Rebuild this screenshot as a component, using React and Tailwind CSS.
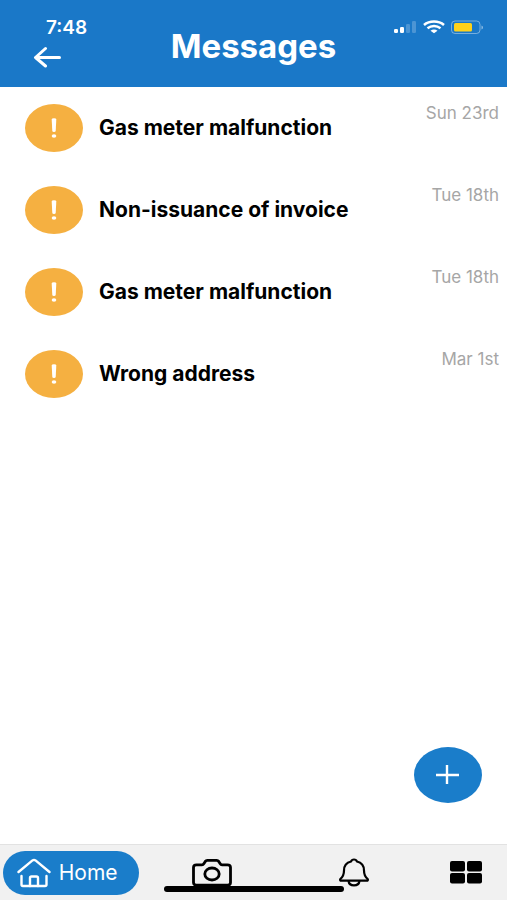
import React from 'react'

const messages = [
    { id: 1, title: 'Gas meter malfunction', date: 'Sun 23rd' },
    { id: 2, title: 'Non-issuance of invoice', date: 'Tue 18th' },
    { id: 3, title: 'Gas meter malfunction', date: 'Tue 18th' },
    { id: 4, title: 'Wrong address', date: 'Mar 1st' },
]

const StatusIcons = () => (
    <svg className="h-4 w-[92px]" viewBox="0 0 92 16" fill="none" aria-hidden="true">
        {/* signal */}
        <rect x="2" y="9" width="4" height="4" rx="1.2" fill="#fff" />
        <rect x="8" y="7" width="4" height="6" rx="1.2" fill="#fff" />
        <rect x="14" y="4" width="4" height="9" rx="1.2" fill="#fff" fillOpacity="0.22" />
        <rect x="20" y="1" width="4" height="12" rx="1.2" fill="#fff" fillOpacity="0.22" />
        {/* wifi */}
        <path d="M32 5C37.500.4 46.500.4 52 5" stroke="#fff" strokeWidth="2.600" />
        <path d="M35.500 8.300c3.700-3 9.300-3 13 0" stroke="#fff" strokeWidth="2.400" />
        <path d="M38.500 10.800c2-1.600 5-1.600 7 0L42 13.300z" fill="#fff" />
        {/* battery */}
        <rect x="59.500" y="1" width="28.500" height="12.500" rx="3.500" stroke="#fff" strokeOpacity="0.4" />
        <rect x="62" y="3" width="18" height="8.500" rx="1.500" fill="#ffd21a" />
        <path d="M89.500 5.500c2 .8 2 3.200 0 4z" fill="#fff" fillOpacity="0.5" />
    </svg>
)

const Header = () => (
    <header className="grid h-[87px] grid-cols-[1fr_auto_1fr] bg-[#1a78c8] text-white">
        <div className="flex flex-col items-start pt-4 pl-8">
            <span className="ml-3.5 text-[19px] leading-6 font-semibold">7:48</span>
            <button type="button" aria-label="Back" className="mt-1.5">
                <svg className="h-[22px] w-[30px]" viewBox="0 0 30 22" fill="none" stroke="currentColor" strokeWidth="3" strokeLinecap="round" strokeLinejoin="round">
                    <path d="M27.500 11.500H3.500M13.500 2.500l-10 9 10 8.500" />
                </svg>
            </button>
        </div>
        <h1 className="pt-6 text-[33px] leading-[44px] font-bold">Messages</h1>
        <div className="flex justify-end pt-5 pr-[23px]">
            <StatusIcons />
        </div>
    </header>
)

const MessageRow = ({ message }) => (
    <li>
        <a href="#message" className="flex h-[82px] items-center gap-4 pr-2 pl-[25px]">
            <span className="flex h-12 w-[58px] shrink-0 items-center justify-center rounded-[50%] bg-[#f5b041] text-white">
                <svg className="h-5 w-2" viewBox="0 0 8 20" fill="currentColor" aria-hidden="true">
                    <path d="M1.700 1.500q0-1.200 2.300-1.200t2.300 1.200L5.700 13q-.1 1-1.700 1t-1.700-1z" />
                    <ellipse cx="4" cy="18" rx="2.300" ry="1.800" />
                </svg>
            </span>
            <h2 className="flex-1 text-[21px] leading-6 font-bold text-black">{message.title}</h2>
            <span className="self-start pt-4 text-[17px] leading-5 text-[#a6a6a6]">{message.date}</span>
        </a>
    </li>
)

const HomeIcon = () => (
    <svg className="h-[30px] w-[34px]" viewBox="0 0 34 30" fill="none" stroke="currentColor" strokeWidth="2.400" strokeLinecap="round" strokeLinejoin="round" aria-hidden="true">
        <path d="M1.500 14L15.500 2.400q1.500-1 3 0L32.500 14" />
        <path d="M4.500 18v8.500q0 1.500 1.500 1.500h22q1.500 0 1.500-1.500V18" />
        <path d="M13 28v-8q0-1.500 1.500-1.500h5q1.500 0 1.500 1.500v8" />
    </svg>
)

const CameraIcon = () => (
    <svg className="h-7 w-10" viewBox="0 0 40 28" fill="none" stroke="currentColor" strokeWidth="2.800" strokeLinejoin="round" aria-hidden="true">
        <path d="M4.500 5.800H10q1.200 0 1.800-1l1.500-2.400q.7-1 2-1h9.400q1.300 0 2 1l1.500 2.400q.6 1 1.800 1h5.500q3 0 3 2.700V23.500q0 2.700-3 2.700h-31q-3 0-3-2.700V8.500q0-2.700 3-2.700z" />
        <ellipse cx="20" cy="15" rx="7.200" ry="6" />
    </svg>
)

const BellIcon = () => (
    <svg className="h-[30px] w-8" viewBox="0 0 32 30" fill="none" stroke="currentColor" strokeWidth="2.200" strokeLinejoin="round" aria-hidden="true">
        <path d="M16 1.500q-2.300 0-2.900 2C8 4.700 6 8 6 12.500c0 4.500-1.200 6.500-3.700 8.500q-.8 1.700 1.200 1.700h25q2 0 1.200-1.700C27.200 19 26 17 26 12.500c0-4.500-2-7.800-7.100-9q-.6-2-2.900-2z" />
        <path d="M10.500 23c.8 5.800 10.200 5.800 11 0" />
    </svg>
)

const GridIcon = () => (
    <svg className="h-[23px] w-8" viewBox="0 0 32 23" fill="currentColor" aria-hidden="true">
        <rect width="15" height="10.500" rx="2" />
        <rect x="17" width="15" height="10.500" rx="2" />
        <rect y="12" width="15" height="10.500" rx="2" />
        <rect x="17" y="12" width="15" height="10.500" rx="2" />
    </svg>
)

const BottomNav = () => (
    <nav className="relative grid h-14 grid-cols-[12fr_12fr_12fr_7fr] items-center justify-items-center border-t border-[#e2e2e2] bg-[#f1f1f1] text-black">
        <a href="#home" className="flex h-11 w-[136px] items-center gap-2 rounded-full bg-[#1a7dca] pl-3.5 text-white">
            <HomeIcon />
            <span className="text-[21px] leading-6">Home</span>
        </a>
        <a href="#camera" aria-label="Camera"><CameraIcon /></a>
        <a href="#notifications" aria-label="Notifications"><BellIcon /></a>
        <a href="#menu" aria-label="Menu"><GridIcon /></a>
        {/* home indicator */}
        <div className="absolute bottom-2 left-1/2 h-[6px] w-[180px] -translate-x-1/2 rounded-full bg-black" />
    </nav>
)

const App = () => {
    return (
        <div className="flex min-h-screen flex-col bg-white font-['Inter',sans-serif]">
            <Header />
            <main className="relative flex-1">
                <ul>
                    {messages.map((message) => (
                        <MessageRow key={message.id} message={message} />
                    ))}
                </ul>
                <button type="button" aria-label="New message" className="absolute right-[25px] bottom-[41px] flex h-14 w-[68px] items-center justify-center rounded-[50%] bg-[#1a7dca] text-white">
                    <svg className="h-5 w-6" viewBox="0 0 24 20" fill="none" stroke="currentColor" strokeWidth="2.400" aria-hidden="true">
                        <path d="M0 10h23M11 0v19" />
                    </svg>
                </button>
            </main>
            <BottomNav />
        </div>
    )
}

export default App
